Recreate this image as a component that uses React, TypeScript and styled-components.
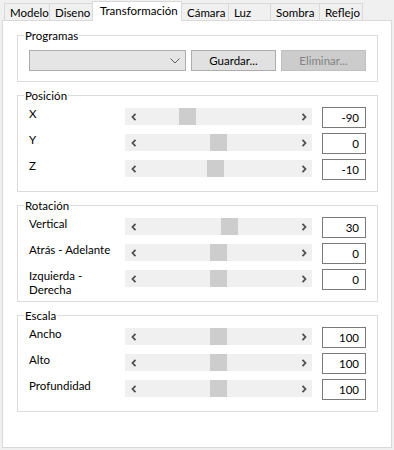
import React from "react";
import styled, { createGlobalStyle } from "styled-components";

const GlobalStyle = createGlobalStyle`
  html, body { margin: 0; padding: 0; background: #f0f0f0; }
  body { font-family: Lato, "Noto Sans", sans-serif; font-size: 11.5px; color: #000; }
  * { box-sizing: border-box; }
`;

const Window = styled.div`
  width: 394px;
  height: 450px;
  display: flex;
  flex-direction: column;
  background: #f0f0f0;
`;

const TabStrip = styled.div`
  height: 20px;
  display: flex;
  align-items: flex-end;
  padding-left: 4px;
  position: relative;
  z-index: 1;
`;

const Tab = styled.div<{ $w: number; $active?: boolean }>`
  width: ${(p) => p.$w}px;
  height: ${(p) => (p.$active ? 20 : 17)}px;
  margin-right: -1px;
  margin-bottom: ${(p) => (p.$active ? -1 : 0)}px;
  border: 1px solid #d9d9d9;
  border-bottom: none;
  background: ${(p) => (p.$active ? "#ffffff" : "#f0f0f0")};
  padding: ${(p) => (p.$active ? "1px 0 0 7px" : "1px 0 0 5px")};
  line-height: 15px;
  white-space: nowrap;
  overflow: hidden;
  position: relative;
  z-index: ${(p) => (p.$active ? 2 : 1)};
`;

const Panel = styled.div`
  height: 428px;
  margin: 0 2px;
  border: 1px solid #d9d9d9;
  background: #fff;
  padding: 14px 13px 0 14px;
  display: flex;
  flex-direction: column;
  gap: 13px;
`;

const GroupBox = styled.div`
  border: 1px solid #dcdcdc;
`;

const Legend = styled.div`
  width: fit-content;
  margin: -8px 0 0 6px;
  padding: 0 1px;
  background: #fff;
  line-height: 15px;
`;

const GroupBody = styled.div<{ $top: number; $bottom: number }>`
  padding: ${(p) => p.$top}px 11px ${(p) => p.$bottom}px 11px;
  display: flex;
  flex-direction: column;
  gap: 5px;
`;

const ProgramRow = styled.div`
  display: flex;
  gap: 5px;
  height: 21px;
`;

const Combo = styled.div`
  width: 157px;
  height: 21px;
  border: 1px solid #acacac;
  background: #e5e5e5;
  display: flex;
  align-items: center;
  justify-content: flex-end;
  padding-right: 5px;
`;

const Button = styled.div<{ $disabled?: boolean }>`
  width: 85px;
  height: 21px;
  border: 1px solid ${(p) => (p.$disabled ? "#bfbfbf" : "#adadad")};
  background: ${(p) => (p.$disabled ? "#cccccc" : "#e1e1e1")};
  color: ${(p) => (p.$disabled ? "#838383" : "#000")};
  display: flex;
  align-items: center;
  justify-content: center;
  line-height: 15px;
`;

const SliderRow = styled.div`
  display: flex;
  align-items: flex-start;
  height: 21px;
`;

const Label = styled.div`
  width: 96px;
  line-height: 14px;
  padding-right: 6px;
`;

const ScrollBar = styled.div`
  width: 187px;
  height: 17px;
  margin-top: 1px;
  margin-right: 10px;
  background: #f0f0f0;
  display: flex;
  align-items: center;
  justify-content: space-between;
  position: relative;
`;

const ArrowBox = styled.div`
  width: 17px;
  height: 17px;
  display: flex;
  align-items: center;
  justify-content: center;
`;

const Thumb = styled.div`
  position: absolute;
  top: 0;
  width: 17px;
  height: 17px;
  background: #cdcdcd;
`;

const ValueBox = styled.div`
  width: 44px;
  height: 21px;
  border: 1px solid #7a7a7a;
  background: #fff;
  text-align: right;
  padding-right: 6px;
  line-height: 19px;
`;

const Arrow = ({ dir }: { dir: "left" | "right" }) => (
  <ArrowBox>
    <svg width="6" height="8" viewBox="0 0 6 8">
      <path
        d={dir === "left" ? "M4.5 0.8 L1.5 4 L4.5 7.2" : "M1.5 0.8 L4.5 4 L1.5 7.2"}
        fill="none"
        stroke="#505050"
        strokeWidth="1.8"
      />
    </svg>
  </ArrowBox>
);

type Row = { label: string; value: string; thumb: number };

const Slider = ({ row }: { row: Row }) => (
  <SliderRow>
    <Label>{row.label}</Label>
    <ScrollBar>
      <Arrow dir="left" />
      <Thumb style={{ left: 17 + Math.round(row.thumb * 136) }} />
      <Arrow dir="right" />
    </ScrollBar>
    <ValueBox>{row.value}</ValueBox>
  </SliderRow>
);

const groups: { title: string; rows: Row[] }[] = [
  {
    title: "Posición",
    rows: [
      { label: "X", value: "-90", thumb: 37 / 136 },
      { label: "Y", value: "0", thumb: 0.5 },
      { label: "Z", value: "-10", thumb: 65 / 136 },
    ],
  },
  {
    title: "Rotación",
    rows: [
      { label: "Vertical", value: "30", thumb: 79 / 136 },
      { label: "Atrás - Adelante", value: "0", thumb: 0.5 },
      { label: "Izquierda - Derecha", value: "0", thumb: 0.5 },
    ],
  },
  {
    title: "Escala",
    rows: [
      { label: "Ancho", value: "100", thumb: 0.5 },
      { label: "Alto", value: "100", thumb: 0.5 },
      { label: "Profundidad", value: "100", thumb: 0.5 },
    ],
  },
];

const tabs = [
  { name: "Modelo", w: 46 },
  { name: "Diseno", w: 44 },
  { name: "Transformación", w: 90, active: true },
  { name: "Cámara", w: 48 },
  { name: "Luz", w: 43 },
  { name: "Sombra", w: 50 },
  { name: "Reflejo", w: 44 },
];

export default function App() {
  return (
    <Window>
      <GlobalStyle />
      <TabStrip>
        {tabs.map((t) => (
          <Tab key={t.name} $w={t.w} $active={t.active}>
            {t.name}
          </Tab>
        ))}
      </TabStrip>
      <Panel>
        <GroupBox>
          <Legend>Programas</Legend>
          <GroupBody $top={7} $bottom={10}>
            <ProgramRow>
              <Combo>
                <svg width="10" height="6" viewBox="0 0 10 6">
                  <path d="M0.5 0.5 L5 5 L9.5 0.5" fill="none" stroke="#606060" strokeWidth="1" />
                </svg>
              </Combo>
              <Button>Guardar...</Button>
              <Button $disabled>Eliminar...</Button>
            </ProgramRow>
          </GroupBody>
        </GroupBox>
        {groups.map((g) => (
          <GroupBox key={g.title}>
            <Legend>{g.title}</Legend>
            <GroupBody $top={4} $bottom={11}>
              {g.rows.map((r) => (
                <Slider key={r.label} row={r} />
              ))}
            </GroupBody>
          </GroupBox>
        ))}
      </Panel>
    </Window>
  );
}
